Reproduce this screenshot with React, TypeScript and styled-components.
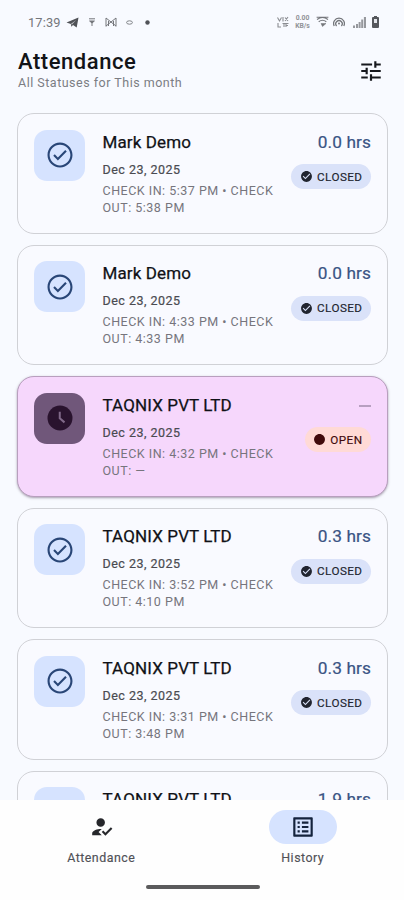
import React from 'react';
import styled, { createGlobalStyle } from 'styled-components';

const GlobalStyle = createGlobalStyle`
  * { box-sizing: border-box; }
  body { margin: 0; background: #f8faff; font-family: Roboto, "Liberation Sans", sans-serif; }
`;

const Screen = styled.div`
  width: 404px;
  height: 900px;
  display: flex;
  flex-direction: column;
  overflow: hidden;
  background: #f8faff;
`;

const StatusBar = styled.div`
  height: 44px;
  flex: none;
  display: flex;
  justify-content: space-between;
  padding: 0 25px 0 28px;
  color: #74767b;
`;

const StatusSide = styled.div`
  display: flex;
  align-items: center;
`;

const Time = styled.span`
  font-size: 12.8px;
  letter-spacing: 0.15px;
  width: 38px;
`;

const Rate = styled.span`
  width: 17px;
  margin-right: 5px;
  display: flex;
  flex-direction: column;
  align-items: center;
  font-size: 6.8px;
  line-height: 8px;
  font-weight: 700;
  color: #909297;
`;

const Glyph = styled.svg<{ $gap: number }>`
  display: block;
  flex: none;
  margin-right: ${(p) => p.$gap}px;
`;

const Header = styled.header`
  height: 69px;
  flex: none;
  display: flex;
  justify-content: space-between;
  align-items: flex-start;
  padding: 4px 20.5px 0 18px;
`;

const Title = styled.h1`
  margin: 0;
  font-size: 22px;
  line-height: 27px;
  font-weight: 500;
  letter-spacing: 0.55px;
  color: #121418;
`;

const Subtitle = styled.div`
  font-size: 12.5px;
  line-height: 16px;
  letter-spacing: 0.5px;
  color: #7b7d83;
`;

const FilterButton = styled.button`
  border: 0;
  padding: 0;
  margin-top: 9.5px;
  background: none;
  color: #16181d;
  display: flex;
`;

const List = styled.main`
  flex: 1;
  min-height: 0;
  overflow: hidden;
  display: flex;
  flex-direction: column;
  gap: 11px;
  padding: 0 16px 0 17px;
`;

const Card = styled.article<{ $open: boolean }>`
  flex: none;
  height: 120.5px;
  display: flex;
  padding: 15.5px 16px 0 16px;
  border: 1px solid ${(p) => (p.$open ? '#b89fbe' : '#d0d1d6')};
  border-radius: 17px;
  background: ${(p) => (p.$open ? '#f6d7fc' : '#f9faff')};
  box-shadow: ${(p) => (p.$open ? '0 1px 2.5px rgba(50, 30, 60, 0.42)' : 'none')};
`;

const Tile = styled.div<{ $open: boolean }>`
  width: 51px;
  height: 51px;
  flex: none;
  display: flex;
  align-items: center;
  justify-content: center;
  border-radius: 13px;
  background: ${(p) => (p.$open ? '#70577a' : '#d6e3ff')};
  color: ${(p) => (p.$open ? '#29132e' : '#294677')};
`;

const Info = styled.div`
  width: 178px;
  flex: none;
  margin-left: 17.5px;
`;

const Name = styled.div`
  font-size: 17px;
  line-height: 25px;
  font-weight: 450;
  letter-spacing: 0.12px;
  color: #101116;
  -webkit-text-stroke: 0.25px currentColor;
  white-space: nowrap;
`;

const DateLine = styled.div`
  margin-top: 6.4px;
  font-size: 12.5px;
  line-height: 17px;
  font-weight: 450;
  letter-spacing: 0.48px;
  color: #4a4b51;
  -webkit-text-stroke: 0.2px currentColor;
`;

const Times = styled.div`
  margin-top: 4px;
  font-size: 12.5px;
  line-height: 17px;
  letter-spacing: 0.5px;
  white-space: nowrap;
  color: #76757d;
`;

const Side = styled.div`
  flex: 1;
  display: flex;
  flex-direction: column;
  align-items: flex-end;
`;

const Hours = styled.div`
  font-size: 17.3px;
  line-height: 25px;
  font-weight: 400;
  letter-spacing: 0.1px;
  color: #3a5484;
  -webkit-text-stroke: 0.2px currentColor;
  white-space: nowrap;
`;

const Dash = styled.span`
  display: block;
  width: 12px;
  height: 2px;
  margin: 12px 0 11px;
  background: #b79fc0;
`;

const Pill = styled.div<{ $open: boolean }>`
  height: 25px;
  margin-top: 9.5px;
  padding: 0 8.5px;
  display: flex;
  align-items: center;
  gap: 4px;
  border-radius: 13px;
  background: ${(p) => (p.$open ? '#ffdad6' : '#dae2f9')};
  color: ${(p) => (p.$open ? '#410a0b' : '#20242f')};
  font-size: 11.7px;
  font-weight: 450;
  letter-spacing: 0.45px;
  -webkit-text-stroke: 0.15px currentColor;
`;

const BottomNav = styled.nav`
  height: 100px;
  flex: none;
  display: flex;
  flex-direction: column;
  align-items: center;
  background: #fefefe;
`;

const Tabs = styled.div`
  width: 404px;
  height: 85px;
  padding-left: 1px;
  display: grid;
  grid-template-columns: 200.5px 1fr;
`;

const Tab = styled.button`
  border: 0;
  padding: 10px 0 0;
  background: none;
  font-family: inherit;
  display: flex;
  flex-direction: column;
  align-items: center;
  font-size: 12.4px;
  line-height: 16px;
  font-weight: 450;
  letter-spacing: 0.5px;
  color: #505157;
  -webkit-text-stroke: 0.15px currentColor;
`;

const Indicator = styled.span<{ $active: boolean }>`
  width: 68px;
  height: 34px;
  margin-bottom: 5.5px;
  margin-left: ${(p) => (p.$active ? 1 : 0)}px;
  display: flex;
  align-items: center;
  justify-content: center;
  border-radius: 17px;
  background: ${(p) => (p.$active ? '#d6e3ff' : 'transparent')};
  color: ${(p) => (p.$active ? '#14233d' : '#26272b')};
`;

const HomeBar = styled.div`
  width: 114px;
  height: 4px;
  margin-left: 1px;
  border-radius: 2px;
  background: #5b5b5c;
`;

const Icon = ({ d, size }: { d: string; size: number }) => (
  <svg width={size} height={size} viewBox="0 0 24 24" fill="currentColor" aria-hidden>
    <path d={d} />
  </svg>
);

const TUNE =
  'M3 17v2h6v-2H3zM3 5v2h10V5H3zm10 16v-2h8v-2h-8v-2h-2v6h2zM7 9v2H3v2h4v2h2V9H7zm14 4v-2H11v2h10zm-6-4h2V7h4V5h-4V3h-2v6z';
const CHECK_OUTLINE =
  'M12 2C6.48 2 2 6.48 2 12s4.48 10 10 10 10-4.48 10-10S17.52 2 12 2zm0 18.300c-4.580 0-8.300-3.720-8.300-8.300S7.420 3.700 12 3.700s8.300 3.720 8.300 8.300-3.720 8.300-8.300 8.300zm4.200-12.300L10.300 13.900 7.800 11.400 6.600 12.600l3.700 3.700 7.100-7.100z';
const CHECK_SOLID =
  'M12 2C6.48 2 2 6.48 2 12s4.48 10 10 10 10-4.48 10-10S17.52 2 12 2zm-2 15l-5-5 1.41-1.41L10 14.17l7.59-7.59L19 8l-9 9z';
const DOT = 'M12 2C6.48 2 2 6.48 2 12s4.48 10 10 10 10-4.48 10-10S17.52 2 12 2z';
const PERSON_CHECK =
  'M9 17l3-2.94c-.39-.04-.68-.06-1-.06-2.67 0-8 1.34-8 4v2h9l-3-3zM11 12c2.21 0 4-1.79 4-4s-1.79-4-4-4-4 1.79-4 4 1.79 4 4 4zM15.47 20.5L12 17l1.4-1.41 2.07 2.08 5.13-5.17 1.4 1.41z';
const LIST =
  'M11 7h6v2h-6zm0 4h6v2h-6zm0 4h6v2h-6zM7 7h2v2H7zm0 4h2v2H7zm0 4h2v2H7zM20.1 3H3.9c-.5 0-.9.4-.9.9v16.2c0 .4.4.9.9.9h16.2c.4 0 .9-.5.9-.9V3.9c0-.5-.5-.9-.9-.9zM19 19H5V5h14v14z';

const ClockIcon = () => (
  <svg width="30" height="30" viewBox="0 0 24 24" aria-hidden>
    <circle cx="12" cy="12" r="10" fill="currentColor" />
    <path d="M11.8 7v5.2l3.8 3.3" fill="none" stroke="#806989" strokeWidth="1.6" />
  </svg>
);

type Entry = { name: string; hours: string | null; inTime: string; outTime: string };

const entries: Entry[] = [
  { name: 'Mark Demo', hours: '0.0 hrs', inTime: '5:37 PM', outTime: '5:38 PM' },
  { name: 'Mark Demo', hours: '0.0 hrs', inTime: '4:33 PM', outTime: '4:33 PM' },
  { name: 'TAQNIX PVT LTD', hours: null, inTime: '4:32 PM', outTime: '—' },
  { name: 'TAQNIX PVT LTD', hours: '0.3 hrs', inTime: '3:52 PM', outTime: '4:10 PM' },
  { name: 'TAQNIX PVT LTD', hours: '0.3 hrs', inTime: '3:31 PM', outTime: '3:48 PM' },
  { name: 'TAQNIX PVT LTD', hours: '1.9 hrs', inTime: '1:32 PM', outTime: '3:26 PM' },
];

const EntryCard = ({ name, hours, inTime, outTime }: Entry) => {
  const open = hours === null;
  return (
    <Card $open={open}>
      <Tile $open={open}>{open ? <ClockIcon /> : <Icon d={CHECK_OUTLINE} size={30} />}</Tile>
      <Info>
        <Name>{name}</Name>
        <DateLine>Dec 23, 2025</DateLine>
        <Times>
          CHECK IN: {inTime} • CHECK
          <br />
          OUT: {outTime}
        </Times>
      </Info>
      <Side>
        <Hours>{open ? <Dash /> : hours}</Hours>
        <Pill $open={open}>
          <Icon d={open ? DOT : CHECK_SOLID} size={13} />
          {open ? 'OPEN' : 'CLOSED'}
        </Pill>
      </Side>
    </Card>
  );
};

const App = () => (
  <>
    <GlobalStyle />
    <Screen>
      <StatusBar>
        <StatusSide>
          <Time>17:39</Time>
          <Glyph $gap={10} width="13" height="11" viewBox="0 0 13 11">
            <path d="M0.5 5.6L12.5 0.5 10.7 10.5 7 8 5.4 9.8 4.8 6.9z" fill="#505257" />
            <path d="M4.8 6.9L10.2 3 6 7.6z" fill="#c5c7cc" />
          </Glyph>
          <Glyph $gap={10} width="6" height="8" viewBox="0 0 6 8">
            <path d="M0 .8h6M.6 3h4.8L3 5zM3 4v4" stroke="currentColor" fill="currentColor" strokeWidth="1" />
          </Glyph>
          <Glyph $gap={9} width="12" height="10" viewBox="0 0 12 10" fill="none" stroke="currentColor">
            <path d="M1 9.5V1l5 4 5-4v8.500M3.500 9V4M8.500 9V4M1 9l5-4 5 4" strokeWidth="1" />
          </Glyph>
          <Glyph $gap={12} width="7" height="5" viewBox="0 0 7 5" fill="none" stroke="currentColor">
            <ellipse cx="3.500" cy="2.500" rx="2.900" ry="1.700" strokeWidth=".9" />
          </Glyph>
          <Glyph $gap={0} width="5" height="5" viewBox="0 0 5 5">
            <circle cx="2.500" cy="2.500" r="2.200" fill="#505257" />
          </Glyph>
        </StatusSide>
        <StatusSide>
          <Glyph $gap={5} width="12" height="12" viewBox="0 0 12 12" fill="none" stroke="#8b8d92">
            <path d="M.5 1.500l2 3.500 2-3.500M6 1v4.500M8 1.500l3 3.500M11 1L8 5M1 7v4h3M5.500 7.500h3M7 7.500V11M9 11V7.500h2.500M9 9.500h2" strokeWidth="1.100" />
          </Glyph>
          <Rate>
            <span>0.00</span>
            <span>KB/s</span>
          </Rate>
          <Glyph $gap={4} width="13" height="12" viewBox="0 0 13 12" fill="none" stroke="currentColor">
            <path d="M.6 1.200h11.800M1 3.500Q6.500-.5 12 3.500M2.700 5.800Q6.500 2.800 10.300 5.800" strokeWidth="1.100" />
            <path d="M5 7.500h5l-3.500 3z" fill="currentColor" strokeWidth=".5" />
          </Glyph>
          <Glyph $gap={8} width="12" height="12" viewBox="0 0 12 12" fill="none" stroke="currentColor">
            <path d="M1.200 10A5.400 5.400 0 1 1 10.800 10M3.600 10A3.200 3.200 0 1 1 8.400 10" strokeWidth="1.300" />
            <circle cx="6" cy="7.500" r="1" fill="currentColor" stroke="none" />
          </Glyph>
          <Glyph $gap={6} width="13" height="11" viewBox="0 0 13 11" fill="#96989d">
            <path d="M0 8.500h2V11H0zM3 7h2v4H3zM5.600 5h2v6h-2zM8.200 2.500h2V11h-2zM10.900 0H13v11h-2.100z" />
          </Glyph>
          <Glyph $gap={0} width="7" height="12" viewBox="0 0 7 12">
            <path d="M2 0h3v1h1q1 0 1 1v9q0 1-1 1H1q-1 0-1-1V2q0-1 1-1h1z" fill="#55575c" />
            <path d="M2 3h3v4H2z" fill="#e4e6eb" />
          </Glyph>
        </StatusSide>
      </StatusBar>
      <Header>
        <div>
          <Title>Attendance</Title>
          <Subtitle>All Statuses for This month</Subtitle>
        </div>
        <FilterButton aria-label="Filter">
          <Icon d={TUNE} size={26} />
        </FilterButton>
      </Header>
      <List>
        {entries.map((entry) => (
          <EntryCard key={entry.inTime} {...entry} />
        ))}
      </List>
      <BottomNav>
        <Tabs>
          <Tab>
            <Indicator $active={false}>
              <Icon d={PERSON_CHECK} size={25.5} />
            </Indicator>
            Attendance
          </Tab>
          <Tab>
            <Indicator $active>
              <Icon d={LIST} size={26} />
            </Indicator>
            History
          </Tab>
        </Tabs>
        <HomeBar />
      </BottomNav>
    </Screen>
  </>
);

export default App;
